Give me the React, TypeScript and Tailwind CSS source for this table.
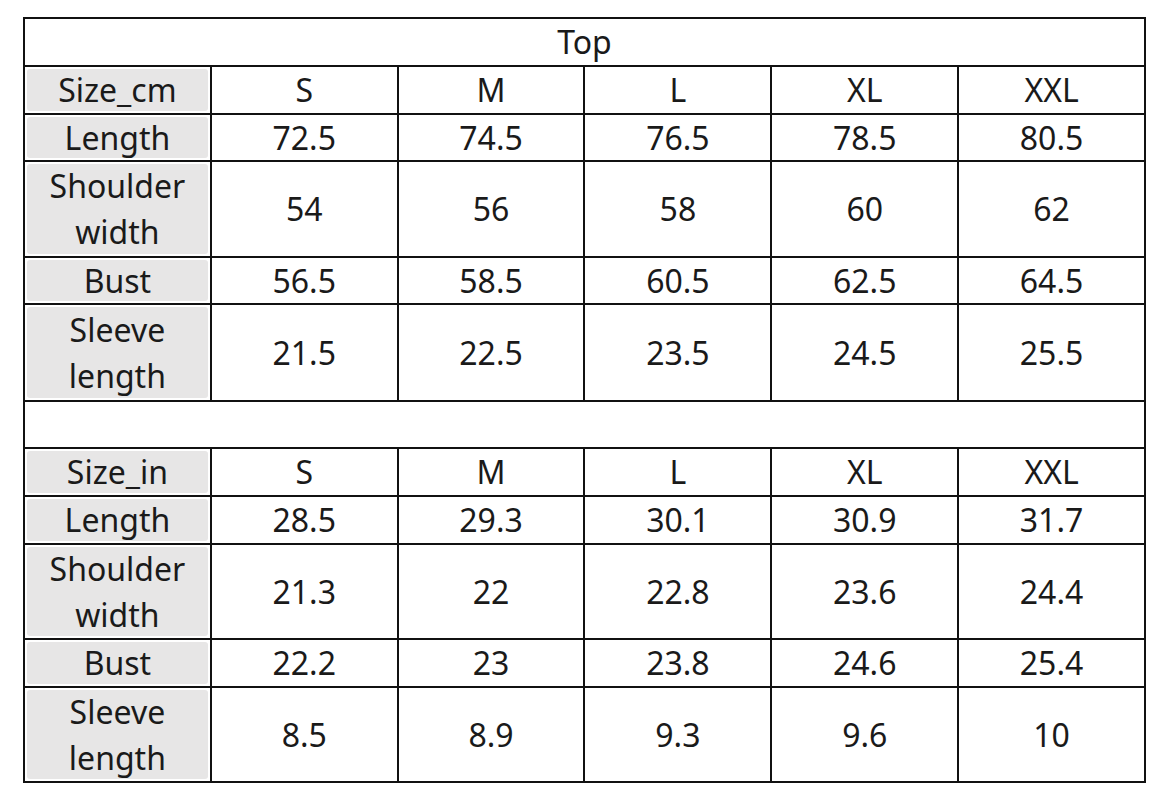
const header = ['S', 'M', 'L', 'XL', 'XXL'];

const cmRows: [string, string[]][] = [
  ['Length', ['72.5', '74.5', '76.5', '78.5', '80.5']],
  ['Shoulder width', ['54', '56', '58', '60', '62']],
  ['Bust', ['56.5', '58.5', '60.5', '62.5', '64.5']],
  ['Sleeve length', ['21.5', '22.5', '23.5', '24.5', '25.5']],
];

const inRows: [string, string[]][] = [
  ['Length', ['28.5', '29.3', '30.1', '30.9', '31.7']],
  ['Shoulder width', ['21.3', '22', '22.8', '23.6', '24.4']],
  ['Bust', ['22.2', '23', '23.8', '24.6', '25.4']],
  ['Sleeve length', ['8.5', '8.9', '9.3', '9.6', '10']],
];

function Label({ text }: { text: string }) {
  return (
    <div className="bg-white p-[2px] flex min-h-0">
      <div className="flex-1 bg-[#e7e6e6] rounded-[3px] flex items-center justify-center text-center leading-[46px] px-4">
        {text}
      </div>
    </div>
  );
}

function Cell({ text }: { text: string }) {
  return <div className="bg-white flex items-center justify-center leading-none">{text}</div>;
}

function Block({ unit, rows }: { unit: string; rows: [string, string[]][] }) {
  return (
    <>
      <Label text={unit} />
      {header.map((h) => (
        <Cell key={h} text={h} />
      ))}
      {rows.map(([name, vals]) => (
        <div key={name} className="contents">
          <Label text={name} />
          {vals.map((v, i) => (
            <Cell key={i} text={v} />
          ))}
        </div>
      ))}
    </>
  );
}

export default function App() {
  return (
    <div className="w-[1169px] h-[800px] bg-white pt-[17px] pl-[23px]">
      <div
        className="w-[1123px] grid grid-cols-6 grid-rows-[46px_46px_45px_94px_45px_95px_45px_46px_46px_93px_46px_93px] gap-[2px] p-[2px] bg-[#111] text-[#1a1a1a] text-[32px]"
        style={{ fontFamily: '"Noto Sans", "Open Sans", sans-serif' }}
      >
        <div className="col-span-6 bg-white flex items-center justify-center leading-none">Top</div>
        <Block unit="Size_cm" rows={cmRows} />
        <div className="col-span-6 bg-white" />
        <Block unit="Size_in" rows={inRows} />
      </div>
    </div>
  );
}
